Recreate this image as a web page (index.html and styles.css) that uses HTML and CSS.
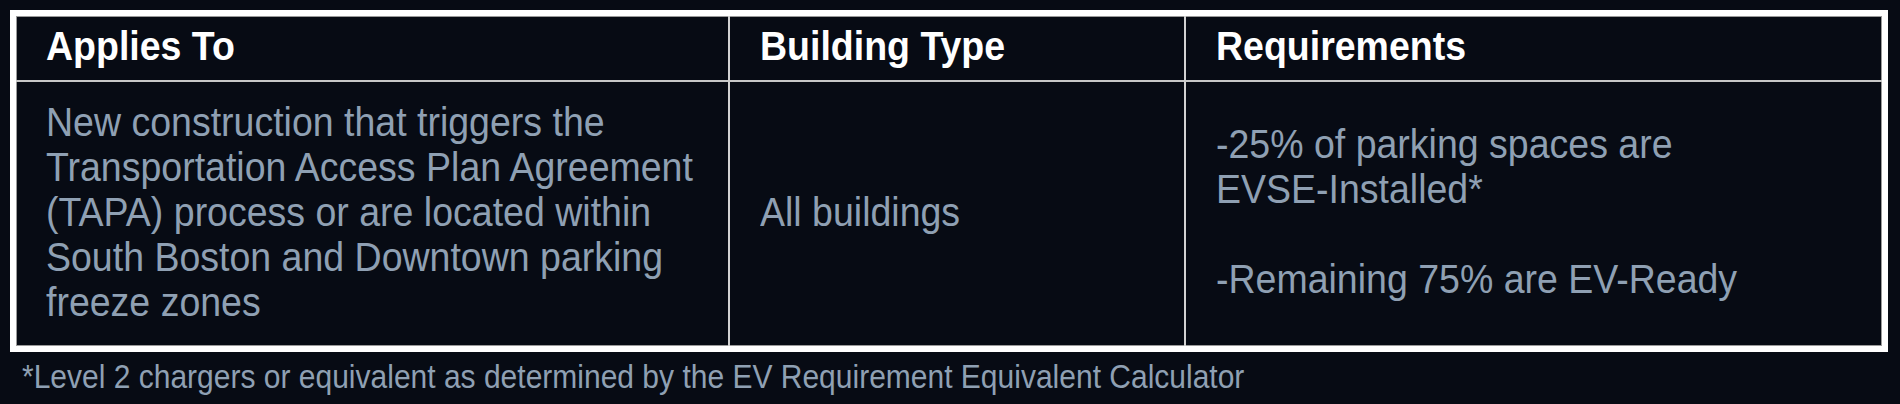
FILE: index.html
```html
<!DOCTYPE html>
<html lang="en">
<head>
<meta charset="utf-8">
<title>EV Requirements</title>
<link rel="stylesheet" href="styles.css">
</head>
<body>
<div class="page">
  <div class="ev-table">
    <div class="cell head first"><span class="txt">Applies To</span></div>
    <div class="cell head"><span class="txt">Building Type</span></div>
    <div class="cell head"><span class="txt">Requirements</span></div>
    <div class="cell body first"><span class="txt">New construction that triggers the Transportation Access Plan Agreement (TAPA) process or are located within South Boston and Downtown parking freeze zones</span></div>
    <div class="cell body"><span class="txt">All buildings</span></div>
    <div class="cell body">
      <div class="txt">
        <p class="req">-25% of parking spaces are<br>EVSE-Installed*</p>
        <p class="req">-Remaining 75% are EV-Ready</p>
      </div>
    </div>
  </div>
  <p class="footnote"><span class="txt">*Level 2 chargers or equivalent as determined by the EV Requirement Equivalent Calculator</span></p>
</div>
</body>
</html>
```

FILE: styles.css
```css
html, body {
  margin: 0;
  padding: 0;
  background: #070b14;
}

body {
  font-family: "Liberation Sans", Arial, sans-serif;
  width: 1900px;
  height: 404px;
  overflow: hidden;
}

.page {
  padding: 10px 12px 0 10px;
}

.ev-table {
  display: grid;
  grid-template-columns: 712px 456px 1fr;
  grid-template-rows: 66px 264px;
  border: 6px solid #ffffff;
  box-shadow: inset 0 0 0 1px #9a9a9a;
  background: #070b14;
}

.cell {
  border-left: 2px solid #d2d2d2;
  padding-left: 30px;
  padding-right: 20px;
  display: flex;
  flex-direction: column;
  justify-content: center;
  font-size: 37.5px;
  line-height: 41px;
}

.cell.first {
  border-left: none;
}

.txt {
  display: block;
  transform: scaleY(1.1);
  transform-origin: 50% 50%;
}

.head {
  color: #ffffff;
  font-weight: bold;
  border-bottom: 2px solid #c8c8c8;
  padding-bottom: 4px;
}

.body {
  color: #8fa0b3;
  padding-bottom: 4px;
}

.req {
  margin: 0;
}

.req + .req {
  margin-top: 41px;
}

.footnote {
  margin: 8px 0 0 12px;
  color: #8fa0b3;
  font-size: 30px;
  line-height: 34px;
}
```
